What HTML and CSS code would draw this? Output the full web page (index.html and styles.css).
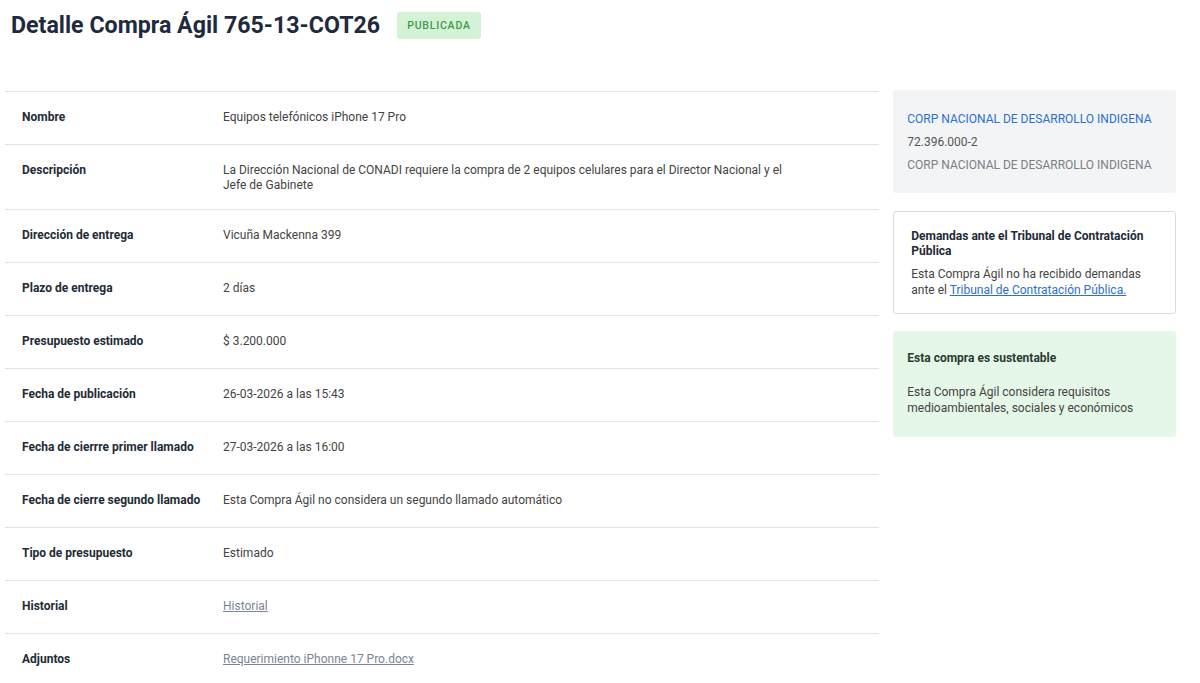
FILE: index.html
```html
<!DOCTYPE html>
<html lang="es">
<head>
<meta charset="utf-8">
<title>Detalle Compra Ágil</title>
<link rel="stylesheet" href="styles.css">
</head>
<body>
<div class="page">
  <header class="head">
    <h1 class="title">Detalle Compra Ágil 765-13-COT26</h1>
    <span class="badge">PUBLICADA</span>
  </header>
  <div class="main">
    <div class="table">
      <div class="row"><div class="lbl">Nombre</div><div class="val">Equipos telefónicos iPhone 17 Pro</div></div>
      <div class="row multi"><div class="lbl">Descripción</div><div class="val">La Dirección Nacional de CONADI requiere la compra de 2 equipos celulares para el Director Nacional y el Jefe de Gabinete</div></div>
      <div class="row"><div class="lbl">Dirección de entrega</div><div class="val">Vicuña Mackenna 399</div></div>
      <div class="row"><div class="lbl">Plazo de entrega</div><div class="val">2 días</div></div>
      <div class="row"><div class="lbl">Presupuesto estimado</div><div class="val">$ 3.200.000</div></div>
      <div class="row"><div class="lbl">Fecha de publicación</div><div class="val">26-03-2026 a las 15:43</div></div>
      <div class="row"><div class="lbl">Fecha de cierrre primer llamado</div><div class="val">27-03-2026 a las 16:00</div></div>
      <div class="row"><div class="lbl">Fecha de cierre segundo llamado</div><div class="val">Esta Compra Ágil no considera un segundo llamado automático</div></div>
      <div class="row"><div class="lbl">Tipo de presupuesto</div><div class="val">Estimado</div></div>
      <div class="row"><div class="lbl">Historial</div><div class="val"><a class="glink" href="#">Historial</a></div></div>
      <div class="row"><div class="lbl">Adjuntos</div><div class="val"><a class="glink" href="#">Requerimiento iPhonne 17 Pro.docx</a></div></div>
    </div>
    <aside class="side">
      <div class="card gray">
        <div class="org">CORP NACIONAL DE DESARROLLO INDIGENA</div>
        <div class="rut">72.396.000-2</div>
        <div class="org2">CORP NACIONAL DE DESARROLLO INDIGENA</div>
      </div>
      <div class="card bordered">
        <div class="ctitle">Demandas ante el Tribunal de Contratación Pública</div>
        <p class="ctext">Esta Compra Ágil no ha recibido demandas ante el <a class="blink" href="#">Tribunal de Contratación Pública.</a></p>
      </div>
      <div class="card green">
        <div class="gtitle">Esta compra es sustentable</div>
        <div class="gtext">Esta Compra Ágil considera requisitos medioambientales, sociales y económicos</div>
      </div>
    </aside>
  </div>
</div>
</body>
</html>
```

FILE: styles.css
```css
* { box-sizing: border-box; }
body {
  margin: 0;
  font-family: Roboto, "Liberation Sans", Arial, sans-serif;
  background: #fff;
  color: #2b2b2b;
}
.page { padding: 11px 24px 0 5px; }
.head {
  display: flex;
  align-items: center;
  gap: 17px;
  padding-left: 6px;
  height: 28px;
}
.title {
  margin: 0;
  font-size: 23.2px;
  font-weight: 700;
  color: #1f2a3c;
}
.badge {
  background: #d4f2d6;
  color: #3d9a4d;
  font-size: 10.5px;
  letter-spacing: 0.8px;
  font-weight: 500;
  padding: 0 10px;
  height: 27px;
  line-height: 27px;
  border-radius: 3px;
}
.main {
  display: flex;
  gap: 14px;
  margin-top: 52px;
}
.table {
  width: 875px;
  border-top: 1px solid #e3e3e3;
}
.row {
  display: flex;
  align-items: flex-start;
  border-bottom: 1px solid #e3e3e3;
  padding: 17px 0 19px 17px;
  font-size: 12px;
  line-height: 16px;
}
.row.multi {
  padding: 18px 0 16px 17px;
  line-height: 15px;
}
.lbl {
  width: 201px;
  font-weight: 700;
  color: #222b36;
  flex-shrink: 0;
}
.val {
  width: 570px;
  color: #444;
}
.glink { color: #7b8494; text-decoration: underline; }
.side {
  width: 283px;
  display: flex;
  flex-direction: column;
  gap: 17px;
}
.card { border-radius: 3px; font-size: 12px; }
.gray {
  background: #f3f4f6;
  padding: 21px 14px 20px 14px;
  line-height: 16px;
  margin-top: -1px;
  margin-bottom: 1px;
}
.org { color: #2c6fcf; }
.rut { color: #555; margin-top: 7px; }
.org2 { color: #7a7f87; margin-top: 7px; }
.bordered {
  border: 1px solid #dcdcdc;
  padding: 17px 17px 15px 17px;
}
.ctitle { font-weight: 700; color: #222b36; line-height: 15px; }
.ctext { color: #444; margin: 7px 0 0; line-height: 16px; }
.blink { color: #2c6fcf; text-decoration: underline; }
.green {
  background: #e5f7e6;
  padding: 19px 14px 21px 14px;
  line-height: 16px;
}
.gtitle { font-weight: 700; color: #2a3a33; }
.gtext { color: #444; margin-top: 18px; }
```
